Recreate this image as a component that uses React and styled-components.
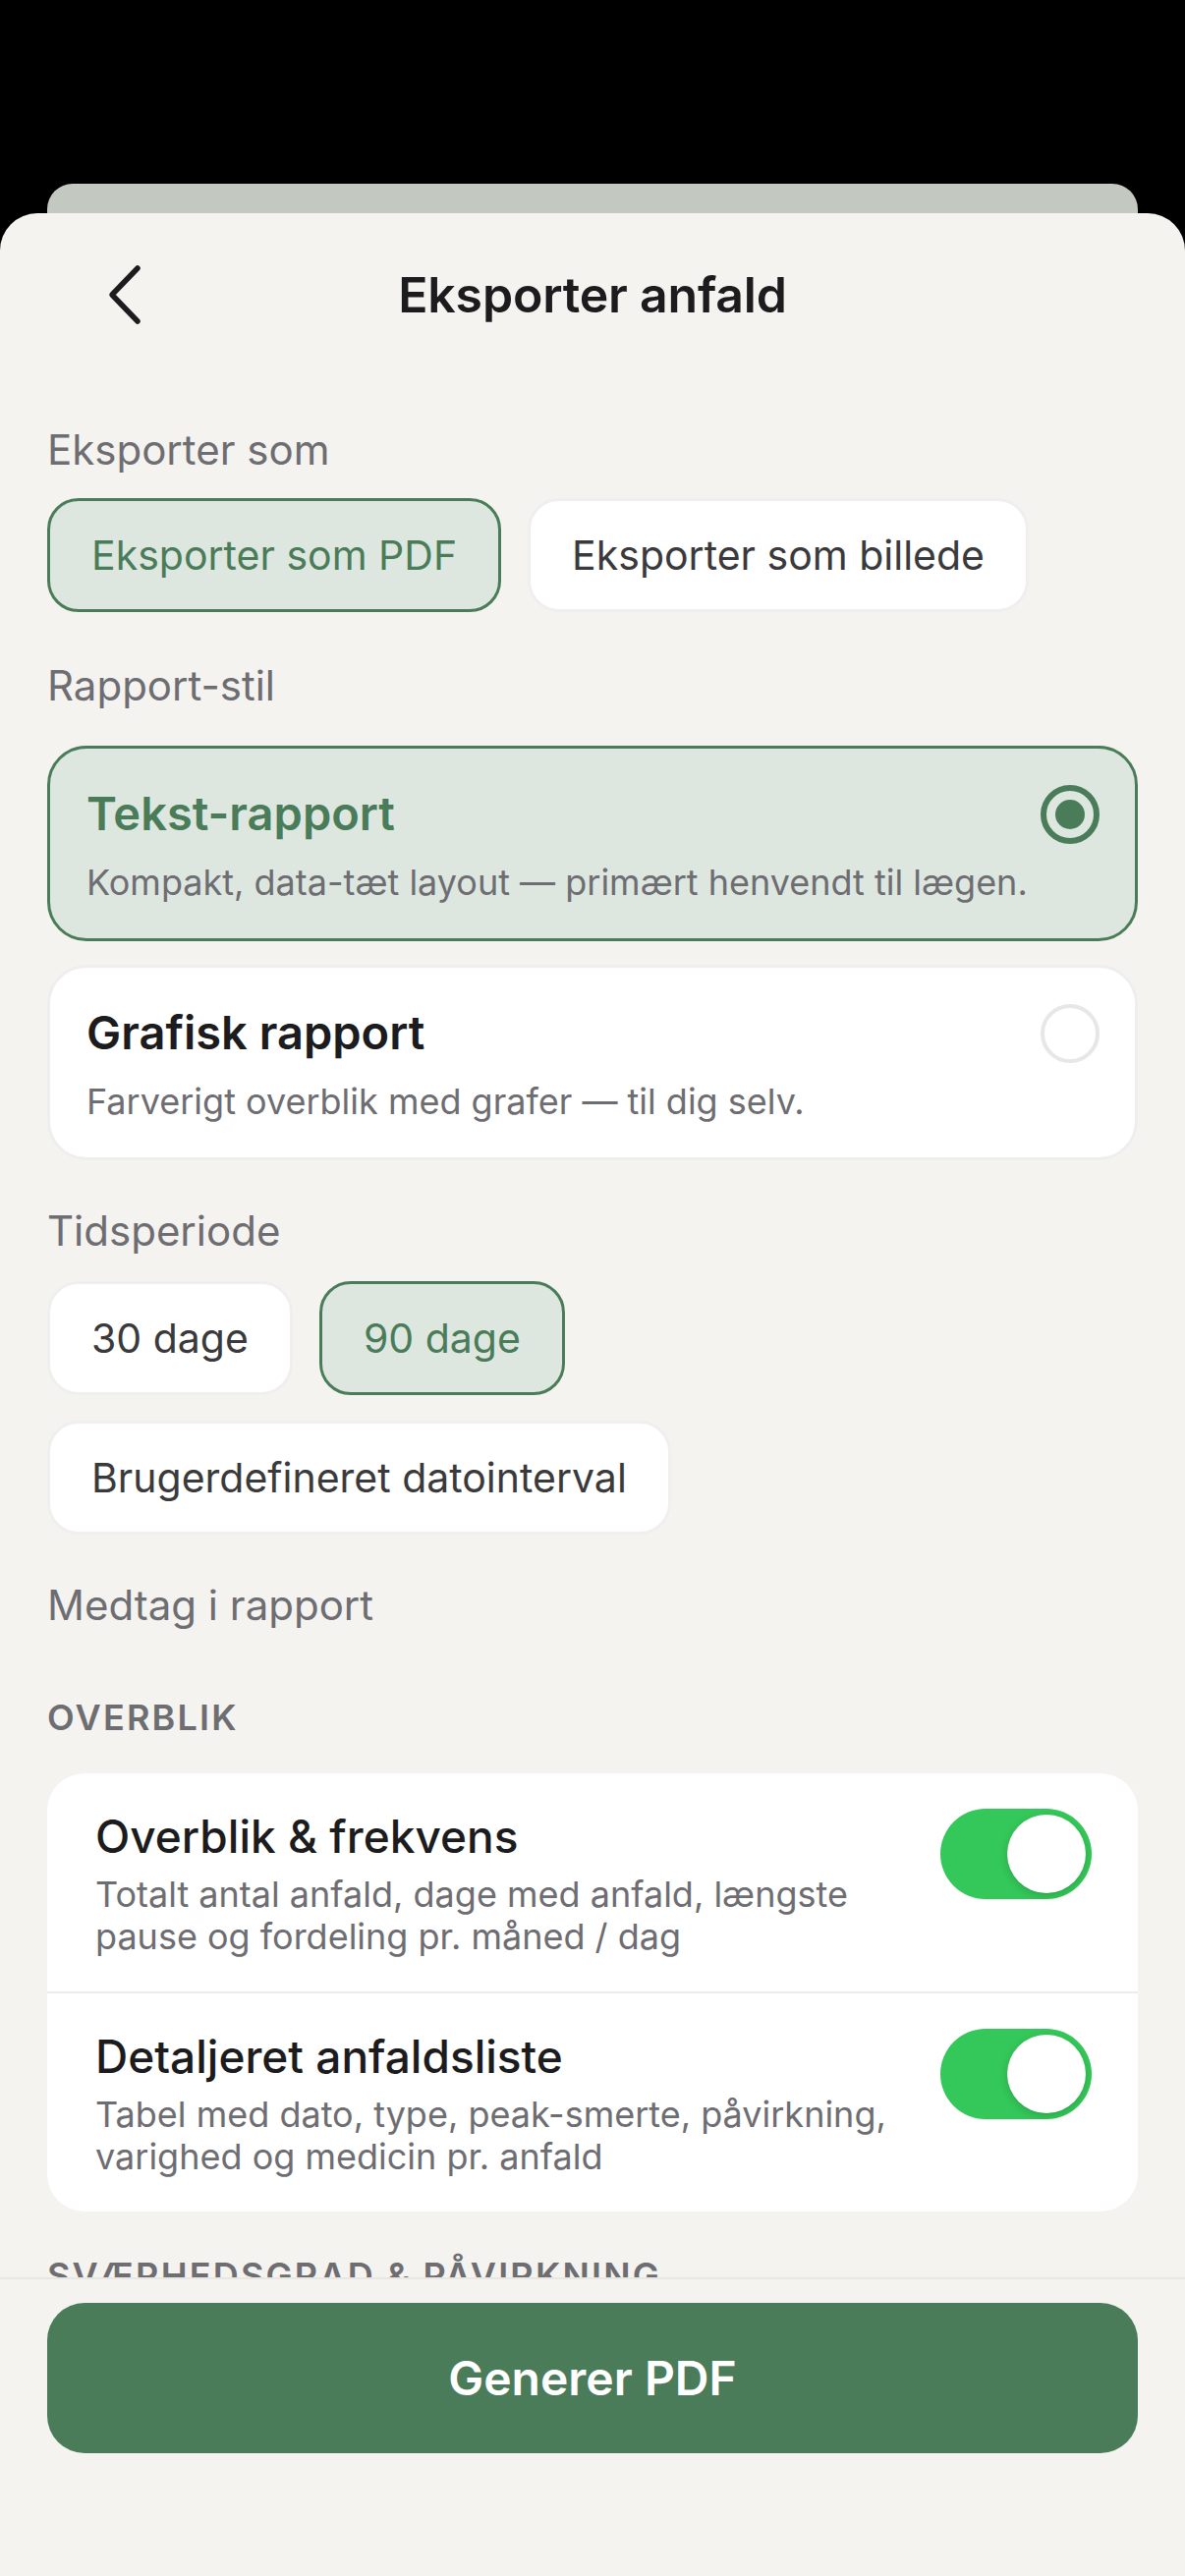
import React, { useState } from "react";
import styled, { createGlobalStyle } from "styled-components";

const GlobalStyle = createGlobalStyle`
  html, body {
    margin: 0;
    padding: 0;
    background: #000;
  }
  * {
    box-sizing: border-box;
  }
  body {
    font-family: Inter, "Noto Sans", "Liberation Sans", sans-serif;
  }
`;

const GREEN = "#4a7c59";
const GREEN_BG = "#dde7e0";
const SHEET_BG = "#f4f3ef";

const Screen = styled.div`
  width: 1206px;
  height: 2622px;
  background: #000;
  display: flex;
  flex-direction: column;
  padding-top: 187px;
  overflow: hidden;
`;

const BackCard = styled.div`
  height: 30px;
  margin: 0 48px;
  background: #c3c8c1;
  border-radius: 26px 26px 0 0;
  flex-shrink: 0;
`;

const Sheet = styled.div`
  flex: 1;
  min-height: 0;
  display: flex;
  flex-direction: column;
  background: ${SHEET_BG};
  border-radius: 38px 38px 0 0;
  overflow: hidden;
`;

const Header = styled.div`
  height: 166px;
  flex-shrink: 0;
  display: grid;
  grid-template-columns: 1fr auto 1fr;
  align-items: center;
`;

const BackButton = styled.button`
  justify-self: start;
  margin-left: 104px;
  width: 44px;
  height: 70px;
  padding: 0;
  border: none;
  background: none;
  display: flex;
  align-items: center;
  justify-content: center;
  cursor: pointer;
`;

const Title = styled.h1`
  margin: 0;
  font-size: 50px;
  font-weight: 600;
  color: #1c1c1e;
  letter-spacing: -0.2px;
`;

const Scroll = styled.div`
  flex: 1;
  min-height: 0;
  overflow: hidden;
  padding: 49px 48px 0;
`;

const Label = styled.div`
  font-size: 42px;
  line-height: 52px;
  color: #6d6d72;
  margin-top: ${(p) => p.$top || 0}px;
  margin-bottom: ${(p) => p.$bottom || 0}px;
`;

const GroupLabel = styled.div`
  font-size: 36px;
  line-height: 44px;
  font-weight: 600;
  letter-spacing: 2.2px;
  text-transform: uppercase;
  color: #6d6d72;
  margin-top: ${(p) => p.$top || 0}px;
  margin-bottom: 35px;
`;

const ChipRow = styled.div`
  display: flex;
  flex-wrap: wrap;
  column-gap: 27px;
  row-gap: 26px;
`;

const Chip = styled.button`
  height: 116px;
  padding: 0 42px;
  border-radius: 32px;
  font-family: inherit;
  font-size: 41px;
  font-weight: 400;
  cursor: pointer;
  background: ${(p) => (p.$active ? GREEN_BG : "#fff")};
  border: 3px solid ${(p) => (p.$active ? GREEN : "#efefef")};
  color: ${(p) => (p.$active ? GREEN : "#3a3a3c")};
`;

const StyleList = styled.div`
  display: flex;
  flex-direction: column;
  gap: 24px;
`;

const StyleCard = styled.div`
  display: flex;
  align-items: flex-start;
  justify-content: space-between;
  gap: 16px;
  padding: 37px 36px 34px 37px;
  border-radius: 40px;
  background: ${(p) => (p.$active ? GREEN_BG : "#fff")};
  border: 3px solid ${(p) => (p.$active ? GREEN : "#eeeeee")};
  cursor: pointer;
`;

const StyleText = styled.div`
  display: flex;
  flex-direction: column;
  gap: 18px;
  min-width: 0;
`;

const StyleTitle = styled.div`
  font-size: 47px;
  line-height: 58px;
  font-weight: 600;
  color: ${(p) => (p.$active ? GREEN : "#1c1c1e")};
`;

const StyleDesc = styled.div`
  font-size: 36px;
  line-height: 46px;
  color: #6d6d72;
  white-space: nowrap;
`;

const Radio = styled.div`
  width: 60px;
  height: 60px;
  border-radius: 50%;
  flex-shrink: 0;
  border: ${(p) => (p.$active ? `6px solid ${GREEN}` : "4px solid #e7e7ea")};
  display: flex;
  align-items: center;
  justify-content: center;

  &::after {
    content: "";
    width: 30px;
    height: 30px;
    border-radius: 50%;
    background: ${GREEN};
    display: ${(p) => (p.$active ? "block" : "none")};
  }
`;

const IncludeCard = styled.div`
  background: #fff;
  border-radius: 38px;
  overflow: hidden;
`;

const IncludeRow = styled.div`
  display: flex;
  align-items: flex-start;
  justify-content: space-between;
  gap: 24px;
  padding: 36px 47px 34px 49px;
  border-top: ${(p) => (p.$first ? "none" : "2px solid #ececec")};
`;

const IncludeText = styled.div`
  display: flex;
  flex-direction: column;
  gap: 10px;
  max-width: 820px;
`;

const IncludeTitle = styled.div`
  font-size: 46px;
  line-height: 56px;
  font-weight: 500;
  color: #1c1c1e;
`;

const IncludeDesc = styled.div`
  font-size: 36px;
  line-height: 43px;
  color: #6d6d72;
`;

const Track = styled.button`
  width: 154px;
  height: 92px;
  flex-shrink: 0;
  border: none;
  border-radius: 46px;
  padding: 6px;
  display: flex;
  justify-content: ${(p) => (p.$on ? "flex-end" : "flex-start")};
  background: ${(p) => (p.$on ? "#34c759" : "#e5e5ea")};
  cursor: pointer;
`;

const Knob = styled.span`
  width: 80px;
  height: 80px;
  border-radius: 50%;
  background: #fff;
  box-shadow: 0 3px 8px rgba(0, 0, 0, 0.15), 0 1px 1px rgba(0, 0, 0, 0.08);
`;

const Footer = styled.div`
  flex-shrink: 0;
  height: 304px;
  padding: 24px 48px 0;
  border-top: 2px solid #e9e7e2;
  background: ${SHEET_BG};
`;

const PrimaryButton = styled.button`
  width: 100%;
  height: 153px;
  border: none;
  border-radius: 38px;
  background: ${GREEN};
  color: #fff;
  font-family: inherit;
  font-size: 48px;
  font-weight: 600;
  cursor: pointer;
`;

const Toggle = ({ on, onClick }) => (
  <Track $on={on} onClick={onClick}>
    <Knob />
  </Track>
);

const ChevronLeft = () => (
  <svg width="40" height="64" viewBox="0 0 40 64" fill="none">
    <path
      d="M34 5 L8 32 L34 59"
      stroke="#1c1c1e"
      strokeWidth="5.5"
      strokeLinecap="round"
      strokeLinejoin="round"
    />
  </svg>
);

const App = () => {
  const [format, setFormat] = useState("pdf");
  const [style, setStyle] = useState("text");
  const [period, setPeriod] = useState("90");
  const [include, setInclude] = useState({ overview: true, list: true });

  const flip = (key) => setInclude((prev) => ({ ...prev, [key]: !prev[key] }));

  return (
    <>
      <GlobalStyle />
      <Screen>
        <BackCard />
        <Sheet>
          <Header>
            <BackButton aria-label="Tilbage">
              <ChevronLeft />
            </BackButton>
            <Title>Eksporter anfald</Title>
            <div />
          </Header>

          <Scroll>
            <Label $bottom={23}>Eksporter som</Label>
            <ChipRow>
              <Chip $active={format === "pdf"} onClick={() => setFormat("pdf")}>
                Eksporter som PDF
              </Chip>
              <Chip $active={format === "image"} onClick={() => setFormat("image")}>
                Eksporter som billede
              </Chip>
            </ChipRow>

            <Label $top={49} $bottom={35}>Rapport-stil</Label>
            <StyleList>
              <StyleCard $active={style === "text"} onClick={() => setStyle("text")}>
                <StyleText>
                  <StyleTitle $active={style === "text"}>Tekst-rapport</StyleTitle>
                  <StyleDesc>Kompakt, data-tæt layout — primært henvendt til lægen.</StyleDesc>
                </StyleText>
                <Radio $active={style === "text"} />
              </StyleCard>
              <StyleCard $active={style === "graphic"} onClick={() => setStyle("graphic")}>
                <StyleText>
                  <StyleTitle $active={style === "graphic"}>Grafisk rapport</StyleTitle>
                  <StyleDesc>Farverigt overblik med grafer — til dig selv.</StyleDesc>
                </StyleText>
                <Radio $active={style === "graphic"} />
              </StyleCard>
            </StyleList>

            <Label $top={46} $bottom={25}>Tidsperiode</Label>
            <ChipRow>
              <Chip $active={period === "30"} onClick={() => setPeriod("30")}>
                30 dage
              </Chip>
              <Chip $active={period === "90"} onClick={() => setPeriod("90")}>
                90 dage
              </Chip>
              <Chip $active={period === "custom"} onClick={() => setPeriod("custom")}>
                Brugerdefineret datointerval
              </Chip>
            </ChipRow>

            <Label $top={46}>Medtag i rapport</Label>

            <GroupLabel $top={66}>Overblik</GroupLabel>
            <IncludeCard>
              <IncludeRow $first>
                <IncludeText>
                  <IncludeTitle>Overblik &amp; frekvens</IncludeTitle>
                  <IncludeDesc>
                    Totalt antal anfald, dage med anfald, længste pause og fordeling pr. måned / dag
                  </IncludeDesc>
                </IncludeText>
                <Toggle on={include.overview} onClick={() => flip("overview")} />
              </IncludeRow>
              <IncludeRow>
                <IncludeText>
                  <IncludeTitle>Detaljeret anfaldsliste</IncludeTitle>
                  <IncludeDesc>
                    Tabel med dato, type, peak-smerte, påvirkning, varighed og medicin pr. anfald
                  </IncludeDesc>
                </IncludeText>
                <Toggle on={include.list} onClick={() => flip("list")} />
              </IncludeRow>
            </IncludeCard>

            <GroupLabel $top={43}>Sværhedsgrad &amp; påvirkning</GroupLabel>
          </Scroll>

          <Footer>
            <PrimaryButton>Generer PDF</PrimaryButton>
          </Footer>
        </Sheet>
      </Screen>
    </>
  );
};

export default App;
